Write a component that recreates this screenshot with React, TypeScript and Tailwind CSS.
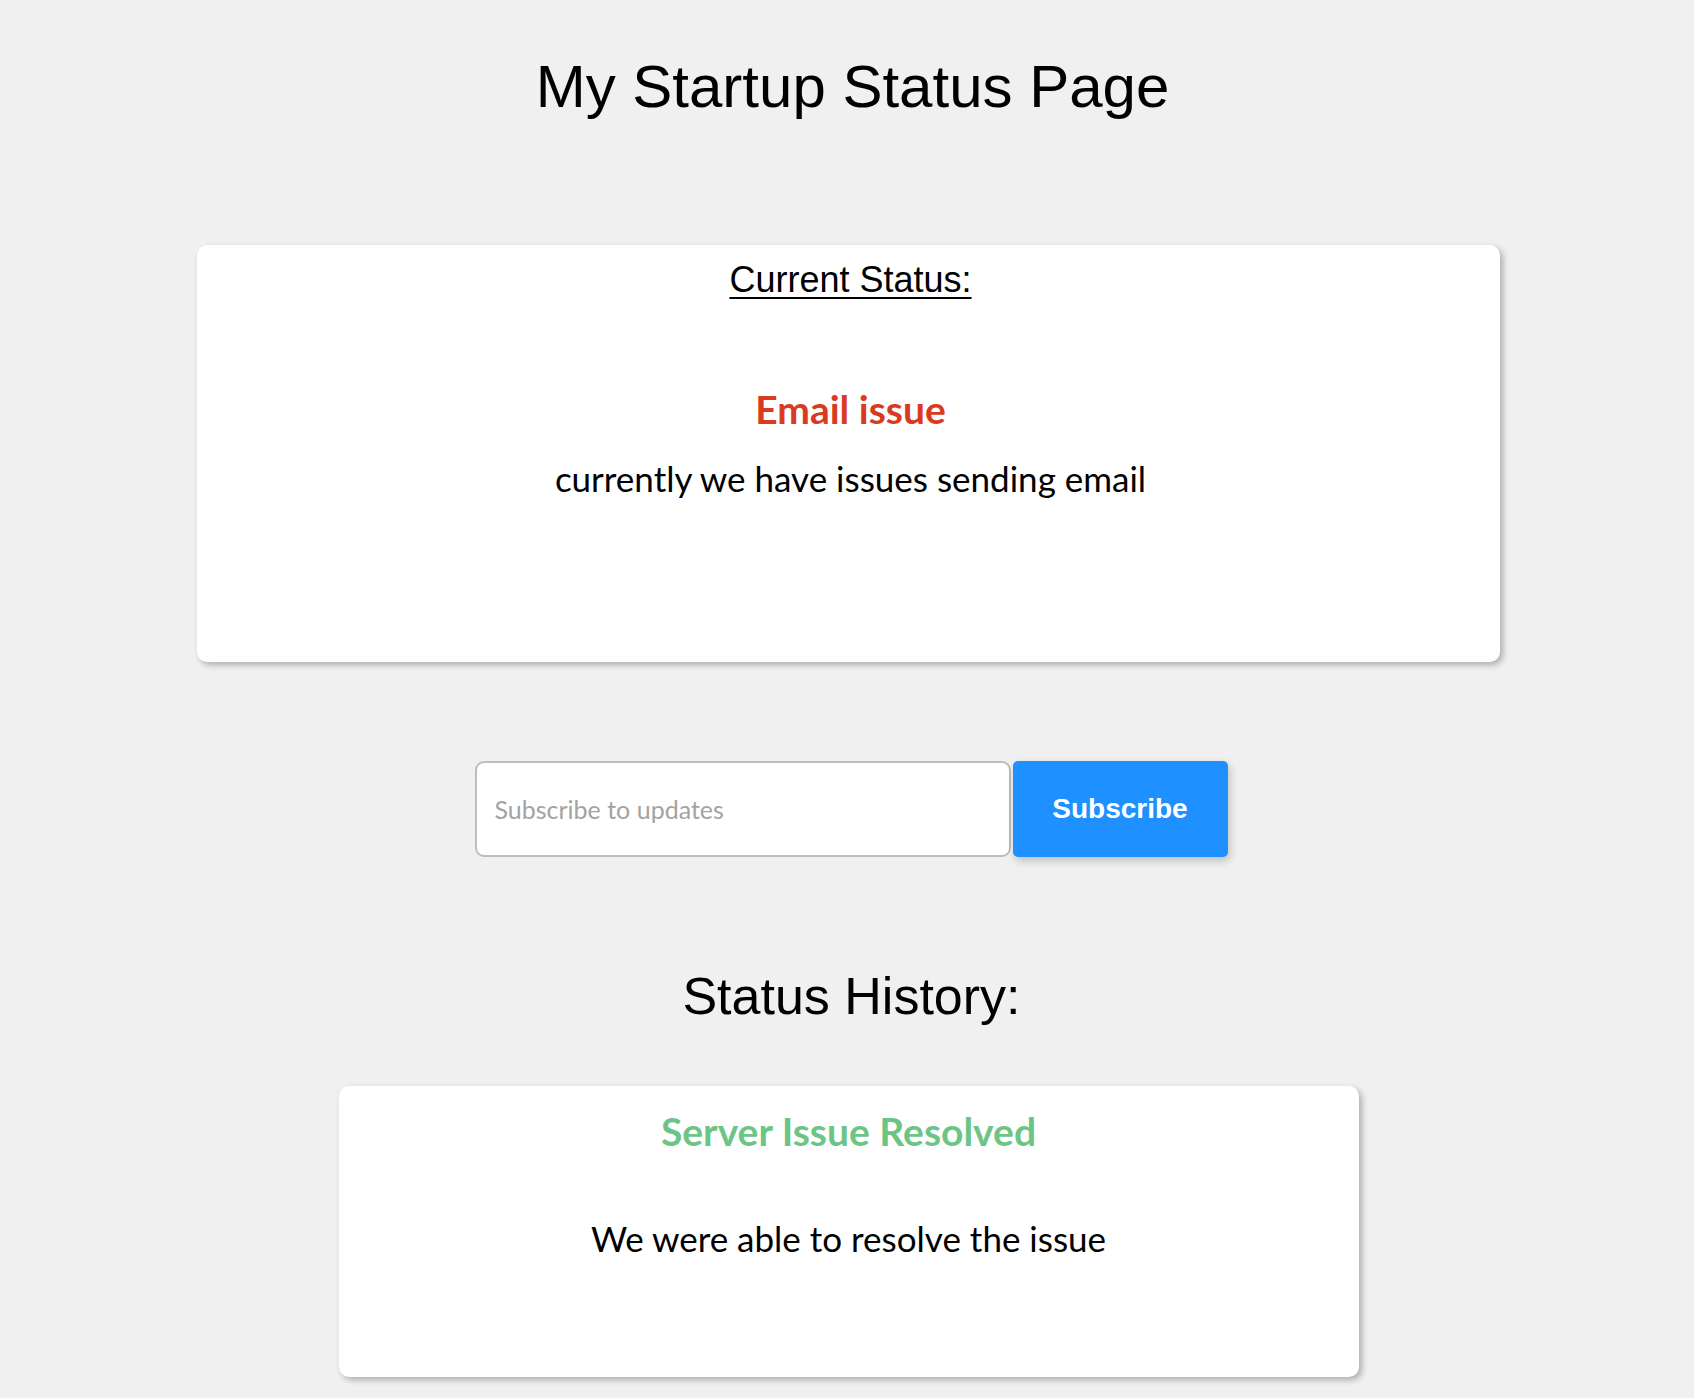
const sans = "font-['Liberation_Sans',Arial,sans-serif]";
const body = "font-['Lato','Noto_Sans',sans-serif]";

function StatusCard({
  title,
  message,
  tone,
}: {
  title: string;
  message: string;
  tone: "issue" | "resolved";
}) {
  const color = tone === "issue" ? "text-[#db3a22]" : "text-[#6cc585]";
  return (
    <>
      <h3 className={`${body} ${color} text-[39px] leading-none font-bold`}>
        {title}
      </h3>
      <p
        className={`${body} text-[35px] leading-none text-black ${
          tone === "issue" ? "mt-[32px]" : "mt-[70px]"
        }`}
      >
        {message}
      </p>
    </>
  );
}

export default function App() {
  return (
    <div className="min-h-screen bg-[#f0f0f0] pt-[57px] pb-[20px] pl-[3px] text-center text-black">
      <h1 className={`${sans} pl-[8px] text-[60px] leading-none`}>My Startup Status Page</h1>

      <section className="mx-auto mt-[128px] h-[417px] w-[1303px] rounded-[10px] bg-white pt-[17px] shadow-[3px_3px_6px_rgba(0,0,0,0.28)]">
        <h2 className={`${sans} pl-[4px] text-[36px] leading-none underline underline-offset-[5px] decoration-2`}>
          Current Status:
        </h2>
        <div className="mt-[92px] pl-[4px]">
          <StatusCard
            title="Email issue"
            message="currently we have issues sending email"
            tone="issue"
          />
        </div>
      </section>

      <form
        className="mt-[99px] flex justify-center gap-[2px] pl-[5px]"
        onSubmit={(e) => e.preventDefault()}
      >
        <input
          type="email"
          placeholder="Subscribe to updates"
          className={`${body} h-[96px] w-[536px] rounded-[9px] border-2 border-[#bdbdbd] bg-white pl-[18px] text-[25px] text-black outline-none placeholder:text-[#a3a3a3]`}
        />
        <button
          type="submit"
          className={`${sans} h-[96px] w-[215px] rounded-[5px] bg-[#1e90ff] text-[28px] font-bold text-white shadow-[2px_4px_8px_rgba(0,0,0,0.2)]`}
        >
          Subscribe
        </button>
      </form>

      <h2 className={`${sans} mt-[113px] pl-[6px] text-[52px] leading-none`}>Status History:</h2>

      <section className="mx-auto mt-[64px] h-[291px] w-[1020px] rounded-[10px] bg-white pt-[26px] shadow-[3px_3px_6px_rgba(0,0,0,0.28)]">
        <StatusCard
          title="Server Issue Resolved"
          message="We were able to resolve the issue"
          tone="resolved"
        />
      </section>
    </div>
  );
}
